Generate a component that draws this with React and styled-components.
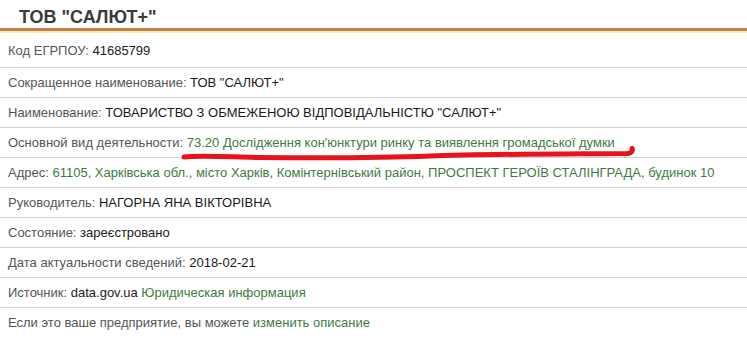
import styled, { createGlobalStyle } from 'styled-components';

const GlobalStyle = createGlobalStyle`
  html, body {
    margin: 0;
    padding: 0;
    background: #fff;
  }
  body {
    font-family: 'Liberation Sans', Arial, sans-serif;
  }
`

const Page = styled.div`
  position: relative;
  width: 747px;
  height: 338px;
  overflow: hidden;
  background-color: white;
`

const Title = styled.h1`
  margin: 0;
  padding: 7px 0 0 19px;
  height: 21px;
  font-size: 18px;
  font-weight: 700;
  line-height: 21px;
  color: #3b3b3b;
  border-bottom: solid 3px #c8803f;
  box-shadow: 0 2px 0 #f7e8c8;
`

const List = styled.div`
  display: flex;
  flex-direction: column;
  margin-top: 2px;
`

const Row = styled.div`
  display: flex;
  align-items: center;
  height: ${(p) => (p.first ? '34px' : '29px')};
  padding: 0 0 0 8px;
  font-size: 13px;
  color: #555;
  white-space: nowrap;
  border-bottom: ${(p) => (p.last ? 'none' : 'solid 1px #d0d0d0')};
  span {
    white-space: pre;
  }
`

const Value = styled.span`
  color: #1a1a1a;
`

const Link = styled.span`
  color: #3f7a3f;
`

const Scribble = styled.svg`
  position: absolute;
  left: 0;
  top: 0;
  pointer-events: none;
`

const rows = [
  { label: 'Код ЕГРПОУ: ', value: '41685799' },
  { label: 'Сокращенное наименование: ', value: 'ТОВ "САЛЮТ+"' },
  { label: 'Наименование: ', value: 'ТОВАРИСТВО З ОБМЕЖЕНОЮ ВІДПОВІДАЛЬНІСТЮ "САЛЮТ+"' },
  { label: 'Основной вид деятельности: ', link: '73.20 Дослідження кон\'юнктури ринку та виявлення громадської думки' },
  { label: 'Адрес: ', link: '61105, Харківська обл., місто Харків, Комінтернівський район, ПРОСПЕКТ ГЕРОЇВ СТАЛІНГРАДА, будинок 10' },
  { label: 'Руководитель: ', value: 'НАГОРНА ЯНА ВІКТОРІВНА' },
  { label: 'Состояние: ', value: 'зареєстровано' },
  { label: 'Дата актуальности сведений: ', value: '2018-02-21' },
  { label: 'Источник: ', value: 'data.gov.ua', link: ' Юридическая информация' },
  { label: 'Если это ваше предприятие, вы можете ', link: 'изменить описание' },
]

const App = () => {
  return (
    <Page>
      <GlobalStyle />
      <Title>ТОВ "САЛЮТ+"</Title>
      <List>
        {rows.map((r, i) => (
          <Row key={i} first={i === 0} last={i === rows.length - 1}>
            <span>{r.label}</span>
            {r.value && <Value>{r.value}</Value>}
            {r.link && <Link>{r.link}</Link>}
          </Row>
        ))}
      </List>
      {/* red hand-drawn underline */}
      <Scribble width="747" height="338">
        <path
          d="M184 157 C 200 155, 230 157, 260 157.5 C 320 158, 380 158, 430 156 C 480 154, 560 154, 628 153.5 C 632 153, 633 150, 632 148.5"
          fill="none"
          stroke="#e8131c"
          strokeWidth="5"
          strokeLinecap="round"
        />
      </Scribble>
    </Page>
  )
}

export default App
